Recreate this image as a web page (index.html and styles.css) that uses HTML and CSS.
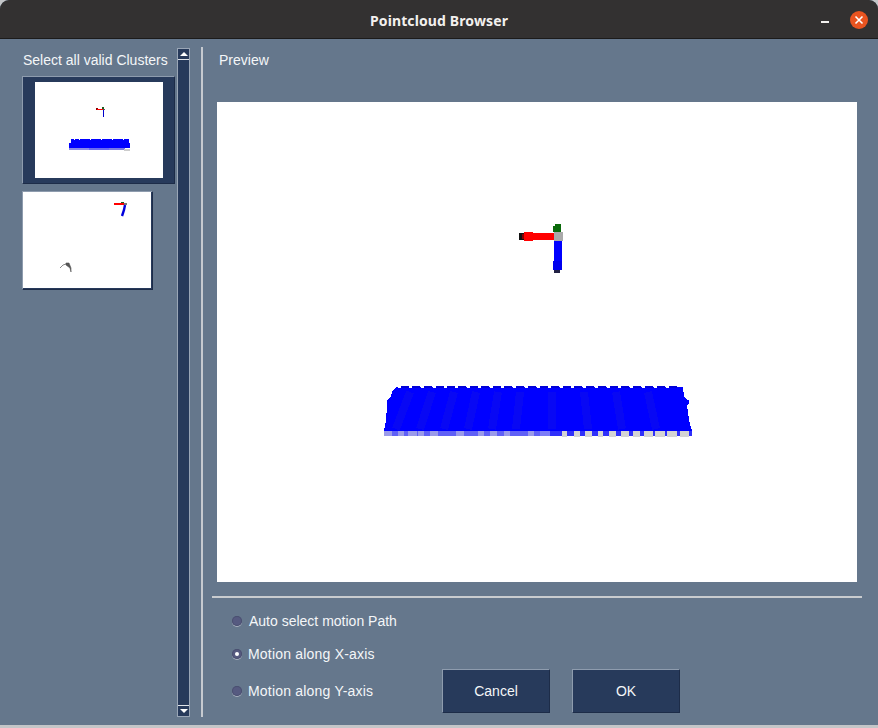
FILE: index.html
```html
<!DOCTYPE html>
<html lang="en">
<head>
    <meta charset="UTF-8">
    <meta name="viewport" content="width=device-width, initial-scale=1.0">
    <title>Pointcloud Browser</title>
    <link rel="stylesheet" href="styles.css">
</head>
<body>
    <div class="window">
        <div class="titlebar">
            <span class="title">Pointcloud Browser</span>
            <span class="minimize"></span>
            <span class="close">
                <svg width="18" height="18" viewBox="0 0 18 18"><circle cx="9" cy="9" r="9" fill="#e95420"/><path d="M5.5 5.5L12.5 12.5M12.5 5.5L5.5 12.5" stroke="#fff" stroke-width="1.6"/></svg>
            </span>
        </div>
        <div class="content">
            <div class="sidebar">
                <div class="sidebar-label">Select all valid Clusters</div>
                <div class="cluster selected">
                    <svg class="thumb" width="128" height="96" viewBox="35 82 128 96" shape-rendering="crispEdges">
                        <rect x="96" y="108" width="2" height="2" fill="#800"/>
                        <rect x="97" y="109" width="7" height="1" fill="#f00"/>
                        <rect x="102" y="107" width="2" height="2" fill="#1c5c1c"/>
                        <rect x="103" y="109" width="2" height="1" fill="#555"/>
                        <rect x="103" y="110" width="1" height="7" fill="#00c"/>
                        <rect x="71" y="139" width="58" height="9" fill="#00f"/>
                        <rect x="69" y="143" width="61" height="5" fill="#00f"/>
                        <g fill="#fff">
                            <rect x="74" y="139" width="1" height="1"/><rect x="79" y="139" width="1" height="1"/>
                            <rect x="90" y="139" width="1" height="1"/><rect x="101" y="139" width="1" height="1"/>
                            <rect x="112" y="139" width="1" height="1"/><rect x="123" y="139" width="1" height="1"/>
                        </g>
                        <rect x="69" y="148" width="20" height="2" fill="#8a8ae8"/>
                        <rect x="89" y="148" width="20" height="2" fill="#6a6af0"/>
                        <rect x="109" y="148" width="16" height="2" fill="#7a7ae4"/>
                        <rect x="124" y="149" width="6" height="2" fill="#ccc"/>
                    </svg>
                </div>
                <div class="cluster">
                    <svg class="thumb" width="128" height="96" viewBox="23 192 128 96">
                        <rect x="114" y="203" width="10" height="2" fill="#f00"/>
                        <rect x="121" y="202" width="3" height="1" fill="#1c5c1c"/>
                        <rect x="124" y="203" width="3" height="2" fill="#777"/>
                        <path d="M125 205L124 210L123 213L122 216" stroke="#00d" stroke-width="2.4" fill="none"/>
                        <path d="M60 268L63 265L66 264" stroke="#888" stroke-width="1" fill="none"/>
                        <path d="M66 263L69 263L71 268L71 272L70 268L66 265Z" fill="#555" stroke="#555" stroke-width="0.6"/>
                    </svg>
                </div>
            </div>
            <div class="scrollbar">
                <div class="scroll-btn"><span class="arrow-up"></span></div>
                <div class="scroll-track"></div>
                <div class="scroll-btn"><span class="arrow-down"></span></div>
            </div>
            <div class="vsep"></div>
            <div class="main">
                <div class="preview-label">Preview</div>
                <svg class="preview" width="640" height="480" viewBox="217 102 640 480" shape-rendering="crispEdges">
                    <!-- axis gizmo -->
                    <rect x="519" y="233" width="5" height="7" fill="#111"/>
                    <rect x="522" y="234" width="3" height="5" fill="#800"/>
                    <rect x="524" y="232" width="9" height="9" fill="#f00"/>
                    <rect x="532" y="233" width="22" height="7" fill="#f00"/>
                    <rect x="553" y="226" width="8" height="6" fill="#0a6a0a"/>
                    <rect x="555" y="224" width="6" height="2" fill="#0a6a0a"/>
                    <rect x="554" y="241" width="8" height="21" fill="#00f"/>
                    <rect x="553" y="261" width="9" height="9" fill="#00e"/>
                    <rect x="554" y="270" width="6" height="3" fill="#224"/>
                    <rect x="554" y="232" width="9" height="9" fill="#aaa"/>
                    <!-- cluster surface -->
                    <polygon points="396,387 683,387 684,396 687,400 689,400 689,404 687,405 689,420 692,431 384,431 386,420 387,406 387,400 391,397 392,392" fill="#00f"/>
                    <g stroke="#0808f4" stroke-width="8" fill="none">
                        <path d="M410 392L396 429"/><path d="M432 392L420 429"/><path d="M454 392L444 429"/>
                        <path d="M476 392L468 429"/><path d="M498 392L492 429"/><path d="M520 392L516 429"/>
                        <path d="M552 392L552 429"/><path d="M584 392L588 429"/><path d="M616 392L622 429"/>
                        <path d="M648 392L656 429"/>
                    </g>
                    <g fill="#0000d8">
                        <rect x="401" y="386" width="8" height="2"/><rect x="412" y="386" width="8" height="2"/>
                        <rect x="424" y="386" width="8" height="2"/><rect x="436" y="386" width="8" height="2"/>
                        <rect x="447" y="386" width="8" height="2"/><rect x="458" y="386" width="8" height="2"/>
                        <rect x="470" y="386" width="8" height="2"/><rect x="481" y="386" width="8" height="2"/>
                        <rect x="493" y="386" width="8" height="2"/><rect x="504" y="386" width="8" height="2"/>
                        <rect x="516" y="386" width="8" height="2"/><rect x="528" y="386" width="8" height="2"/>
                        <rect x="540" y="386" width="8" height="2"/><rect x="551" y="386" width="8" height="2"/>
                        <rect x="563" y="386" width="8" height="2"/><rect x="574" y="386" width="8" height="2"/>
                        <rect x="586" y="386" width="8" height="2"/><rect x="598" y="386" width="8" height="2"/>
                        <rect x="610" y="386" width="8" height="2"/><rect x="621" y="386" width="8" height="2"/>
                        <rect x="633" y="386" width="8" height="2"/><rect x="645" y="386" width="8" height="2"/>
                        <rect x="657" y="386" width="8" height="2"/><rect x="669" y="386" width="8" height="2"/>
                    </g>
                    <g fill="#fff">
                        <rect x="398" y="387" width="3" height="1"/><rect x="409" y="387" width="3" height="1"/>
                        <rect x="421" y="387" width="3" height="1"/><rect x="433" y="387" width="3" height="1"/>
                        <rect x="444" y="387" width="3" height="1"/><rect x="455" y="387" width="3" height="1"/>
                        <rect x="467" y="387" width="3" height="1"/><rect x="478" y="387" width="3" height="1"/>
                        <rect x="490" y="387" width="3" height="1"/><rect x="501" y="387" width="3" height="1"/>
                        <rect x="513" y="387" width="3" height="1"/><rect x="525" y="387" width="3" height="1"/>
                        <rect x="537" y="387" width="3" height="1"/><rect x="548" y="387" width="3" height="1"/>
                        <rect x="560" y="387" width="3" height="1"/><rect x="571" y="387" width="3" height="1"/>
                        <rect x="583" y="387" width="3" height="1"/><rect x="595" y="387" width="3" height="1"/>
                        <rect x="607" y="387" width="3" height="1"/><rect x="618" y="387" width="3" height="1"/>
                        <rect x="630" y="387" width="3" height="1"/><rect x="642" y="387" width="3" height="1"/>
                        <rect x="654" y="387" width="3" height="1"/><rect x="666" y="387" width="3" height="1"/>
                    </g>
                    <!-- lit front edge -->
                    <rect x="384" y="431" width="308" height="5" fill="#6060f6"/>
                    <g fill="#9a9aea">
                        <rect x="384" y="431" width="8" height="5"/><rect x="398" y="431" width="6" height="5"/>
                        <rect x="408" y="431" width="9" height="5"/><rect x="418" y="431" width="6" height="5"/>
                        <rect x="430" y="431" width="8" height="5"/><rect x="456" y="431" width="8" height="5"/>
                        <rect x="478" y="431" width="6" height="5"/><rect x="490" y="431" width="7" height="5"/>
                        <rect x="504" y="431" width="6" height="5"/><rect x="528" y="431" width="6" height="5"/>
                    </g>
                    <rect x="540" y="431" width="10" height="5" fill="#7c7cf8"/>
                    <rect x="550" y="431" width="142" height="5" fill="#3030fa"/>
                    <g fill="#d4d4d4">
                        <rect x="562" y="431" width="5" height="6"/><rect x="574" y="431" width="6" height="6"/>
                        <rect x="585" y="431" width="7" height="6"/><rect x="598" y="431" width="5" height="6"/>
                        <rect x="609" y="431" width="7" height="6"/><rect x="621" y="431" width="8" height="6"/>
                        <rect x="633" y="431" width="7" height="6"/><rect x="644" y="431" width="9" height="6"/>
                        <rect x="655" y="431" width="10" height="6"/><rect x="667" y="431" width="10" height="6"/>
                        <rect x="680" y="431" width="9" height="6"/>
                    </g>
                </svg>
                <div class="hsep"></div>
                <div class="controls">
                    <div class="options">
                        <label class="option first"><span class="radio"></span>Auto select motion Path</label>
                        <label class="option"><span class="radio checked"></span>Motion along X-axis</label>
                        <label class="option last"><span class="radio"></span>Motion along Y-axis</label>
                    </div>
                    <button class="btn">Cancel</button>
                    <button class="btn">OK</button>
                </div>
            </div>
        </div>
    </div>
</body>
</html>
```

FILE: styles.css
```css
html, body {
    margin: 0;
    height: 100%;
}
body {
    background-color: #c4c6c8;
    font-family: "Liberation Sans", Arial, sans-serif;
    font-size: 14px;
    color: #f4f6f8;
    overflow: hidden;
}
.window {
    width: 878px;
    height: 725px;
    background-color: #65778c;
    border-radius: 9px 9px 0 0;
    box-sizing: border-box;
    overflow: hidden;
}
.titlebar {
    height: 39px;
    padding-top: 3px;
    background-color: #333131;
    border-bottom: 1px solid #1c1b1b;
    box-sizing: border-box;
    display: flex;
    align-items: center;
    justify-content: center;
    position: relative;
}
.title {
    font-family: "Noto Sans", sans-serif;
    font-weight: 700;
    font-size: 14px;
    letter-spacing: 0.12px;
    color: #f2f0ee;
}
.minimize {
    position: absolute;
    left: 821px;
    top: 21px;
    width: 8px;
    height: 2px;
    background-color: #f2f0ee;
}
.close {
    position: absolute;
    left: 850px;
    top: 11px;
    width: 18px;
    height: 18px;
}
.content {
    display: flex;
    padding-top: 8px;
    height: 670px;
}
.sidebar {
    margin-left: 22px;
    width: 153px;
}
.sidebar-label {
    height: 29px;
    line-height: 26px;
    padding-left: 1px;
    white-space: nowrap;
}
.cluster {
    display: flex;
    width: 129px;
    height: 97px;
    margin-bottom: 7px;
    background-color: #273a5b;
    border: 1px solid #8e9cae;
    border-right-color: #1d2c48;
    border-bottom-color: #1d2c48;
}
.cluster.selected {
    width: 153px;
    height: 108px;
    padding: 5px 12px 0;
    box-sizing: border-box;
}
.thumb {
    background-color: #fff;
    display: block;
    flex: none;
}
.scrollbar {
    width: 13px;
    margin-left: 2px;
    margin-top: 1px;
    display: flex;
    flex-direction: column;
    border: 1px solid #9aa6b6;
    box-sizing: border-box;
    height: 669px;
    background-color: #273a5b;
}
.scroll-btn {
    height: 10px;
    display: flex;
    align-items: center;
    justify-content: center;
    border-bottom: 1px solid #dfe3e8;
}
.scroll-btn:last-child {
    border-bottom: none;
    border-top: 1px solid #dfe3e8;
}
.scroll-track {
    flex: 1;
}
.arrow-up {
    border-left: 4px solid transparent;
    border-right: 4px solid transparent;
    border-bottom: 4px solid #fff;
}
.arrow-down {
    border-left: 4px solid transparent;
    border-right: 4px solid transparent;
    border-top: 4px solid #fff;
}
.vsep {
    width: 2px;
    margin-left: 11px;
    background-color: #c6cad0;
}
.main {
    margin-left: 9px;
    width: 650px;
}
.preview-label {
    height: 55px;
    line-height: 26px;
    padding-left: 7px;
}
.preview {
    display: block;
    margin-left: 5px;
    background-color: #fff;
}
.hsep {
    height: 2px;
    margin-top: 14px;
    background-color: #c9cccf;
}
.controls {
    display: flex;
    padding-left: 20px;
    gap: 22px;
}
.options {
    width: 188px;
    padding-top: 13px;
}
.option {
    display: flex;
    align-items: center;
    gap: 6px;
    height: 20px;
    letter-spacing: 0.2px;
    white-space: nowrap;
}
.option.first {
    gap: 7px;
    margin-bottom: 13px;
    letter-spacing: 0;
}
.option.last {
    margin-top: 17px;
}
.radio {
    width: 10px;
    height: 10px;
    border-radius: 50%;
    background-color: #565a80;
    box-shadow: inset 0 0 0 1px #4a5070, 0 1px 0 #aab2c0;
    display: flex;
    align-items: center;
    justify-content: center;
    flex: none;
}
.radio.checked::after {
    content: "";
    width: 4px;
    height: 4px;
    border-radius: 50%;
    background-color: #fff;
}
.btn {
    width: 108px;
    height: 44px;
    margin-top: 71px;
    padding: 0;
    background-color: #273a5b;
    color: #f4f6f8;
    font-family: "Liberation Sans", Arial, sans-serif;
    font-size: 14px;
    border: 1px solid #8e9cae;
    border-right-color: #1d2c48;
    border-bottom-color: #1d2c48;
}
```
